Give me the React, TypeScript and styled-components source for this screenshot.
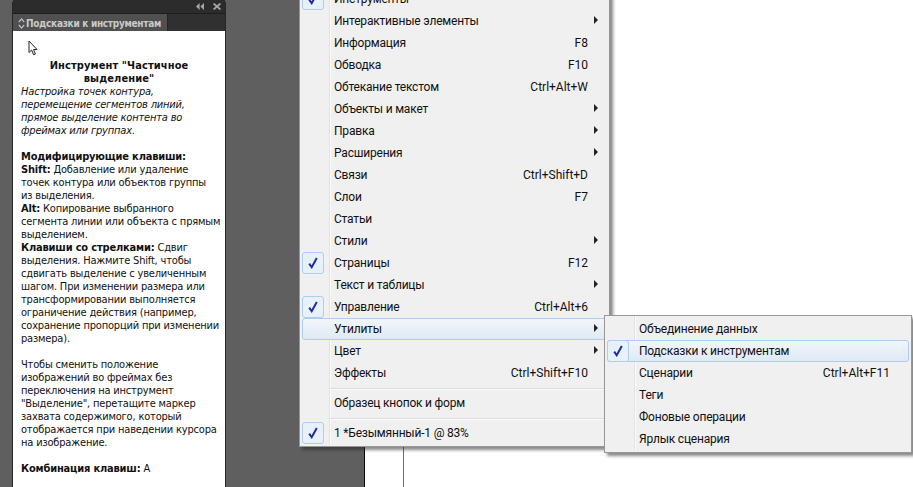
import React from 'react';
import styled, { createGlobalStyle } from 'styled-components';

const Global = createGlobalStyle`
  html, body { margin: 0; padding: 0; background: #fff; }
  #root { width: 913px; height: 487px; }
`;

const Screen = styled.div`
  position: relative;
  width: 913px;
  height: 487px;
  overflow: hidden;
  display: flex;
  background: #5f5f5f;
`;

const Panel = styled.section`
  width: 212px;
  margin-left: 12px;
  height: 487px;
  display: flex;
  flex-direction: column;
  background: #2f2f2f;
  border-left: 1px solid #262626;
  border-right: 1px solid #262626;
  border-radius: 4px 4px 0 0;
  box-sizing: content-box;
`;

const TitleBar = styled.div`
  height: 13px;
  display: flex;
  align-items: center;
  justify-content: flex-end;
  gap: 9px;
  padding-right: 4px;
  background: #2c2c2c;
  border-bottom: 1px solid #1e1e1e;
`;

const TabRow = styled.div`
  height: 17px;
  display: flex;
  background: #303030;
`;

const Tab = styled.div`
  width: 155px;
  display: flex;
  align-items: center;
  gap: 1px;
  padding: 1px 0 0 5px;
  box-sizing: border-box;
  background: #505050;
  border-right: 1px solid #262626;
  color: #cacaca;
  font: bold 10px "DejaVu Sans", sans-serif;
  font-stretch: condensed;
  letter-spacing: -0.3px;
  white-space: nowrap;
  svg { flex-shrink: 0; }
`;

const Help = styled.div`
  position: relative;
  flex: 1;
  background: #fff;
  padding: 28px 0 0 8px;
  color: #111;
  font: 11px/13px "DejaVu Sans", sans-serif;
  font-stretch: condensed;
  letter-spacing: -0.18px;
  white-space: nowrap;
  overflow: hidden;
`;

const Heading = styled.div`
  font-weight: bold;
  text-align: center;
  margin-left: -8px;
  letter-spacing: 0.1px;
`;

const Lead = styled.div`
  font-style: italic;
  margin-bottom: 13px;
`;

const Para = styled.div`
  margin-bottom: 13px;
`;

const Pointer = styled.svg`
  position: absolute;
  left: 15px;
  top: 9px;
`;

const Workspace = styled.div`
  width: 138px;
  background: #5f5f5f;
`;

const Page = styled.div`
  flex: 1;
  display: flex;
  background: #fff;
  border-left: 1px solid #0a0a0a;
  padding-left: 38px;
`;

const Guide = styled.div`
  width: 1px;
  background: #9a3fe0;
`;

const Menu = styled.div<{ $left: number; $top: number; $width: number }>`
  position: absolute;
  left: ${p => p.$left}px;
  top: ${p => p.$top}px;
  width: ${p => p.$width}px;
  box-sizing: border-box;
  padding: 2px;
  background: linear-gradient(to right, #f0f0f0 0, #f0f0f0 29px, #e2e2e2 29px, #e2e2e2 30px, #fbfbfb 30px, #fbfbfb 31px, #f0f0f0 31px);
  background-size: 100% calc(100% - 2px);
  background-repeat: no-repeat;
  background-color: #f0f0f0;
  border: 1px solid #979797;
  box-shadow: 3px 3px 3px rgba(40, 40, 40, 0.55);
  color: #111;
  font: 12px Roboto, sans-serif;
`;

const Item = styled.div<{ $hot?: boolean }>`
  position: relative;
  height: 22px;
  display: flex;
  align-items: center;
  box-sizing: border-box;
  padding: 0 ${p => (p.$hot ? 18 : 19)}px 0 ${p => (p.$hot ? 31 : 32)}px;
  border: ${p => (p.$hot ? '1px solid #aeccf0' : 'none')};
  border-radius: 3px;
  background: ${p => (p.$hot ? 'linear-gradient(to bottom, #f2f6fb, #dfe9f6)' : 'transparent')};
  white-space: nowrap;
`;

const Label = styled.span`
  flex: 1;
  letter-spacing: -0.2px;
`;

const Arrow = styled.span<{ $hot?: boolean }>`
  position: absolute;
  right: ${p => (p.$hot ? 8 : 9)}px;
  top: 50%;
  margin-top: -5px;
  border-left: 4px solid #222;
  border-top: 4px solid transparent;
  border-bottom: 4px solid transparent;
`;

const CheckBox = styled.span<{ $hot?: boolean }>`
  position: absolute;
  left: ${p => (p.$hot ? -1 : 0)}px;
  top: ${p => (p.$hot ? -1 : 0)}px;
  width: 22px;
  height: 22px;
  box-sizing: border-box;
  display: flex;
  align-items: center;
  justify-content: center;
  border: 1px solid #aeccf0;
  border-radius: 3px;
  background: #e8f0fa;
`;

const Divider = styled.div`
  height: 1px;
  margin: 4px 0 2px 28px;
  background: #dcdcdc;
  border-bottom: 1px solid #fbfbfb;
`;

const Check = () => (
  <svg width="10" height="12" viewBox="0 0 10 12">
    <path d="M1.2 6.6 L3.7 10.2 L8.8 1" fill="none" stroke="#1c2f9e" strokeWidth="2" />
  </svg>
);

type Row = { t: string; k?: string; sub?: boolean; on?: boolean; hot?: boolean };

const Rows = ({ rows }: { rows: Row[] }) => (
  <>
    {rows.map(r => (
      <Item key={r.t} $hot={r.hot}>
        {r.on && (
          <CheckBox $hot={r.hot}>
            <Check />
          </CheckBox>
        )}
        <Label>{r.t}</Label>
        {r.k && <span>{r.k}</span>}
        {r.sub && <Arrow $hot={r.hot} />}
      </Item>
    ))}
  </>
);

const mainRows: Row[] = [
  { t: 'Инструменты', on: true },
  { t: 'Интерактивные элементы', sub: true },
  { t: 'Информация', k: 'F8' },
  { t: 'Обводка', k: 'F10' },
  { t: 'Обтекание текстом', k: 'Ctrl+Alt+W' },
  { t: 'Объекты и макет', sub: true },
  { t: 'Правка', sub: true },
  { t: 'Расширения', sub: true },
  { t: 'Связи', k: 'Ctrl+Shift+D' },
  { t: 'Слои', k: 'F7' },
  { t: 'Статьи' },
  { t: 'Стили', sub: true },
  { t: 'Страницы', k: 'F12', on: true },
  { t: 'Текст и таблицы', sub: true },
  { t: 'Управление', k: 'Ctrl+Alt+6', on: true },
  { t: 'Утилиты', sub: true, hot: true },
  { t: 'Цвет', sub: true },
  { t: 'Эффекты', k: 'Ctrl+Shift+F10' },
];

const subRows: Row[] = [
  { t: 'Объединение данных' },
  { t: 'Подсказки к инструментам', on: true, hot: true },
  { t: 'Сценарии', k: 'Ctrl+Alt+F11' },
  { t: 'Теги' },
  { t: 'Фоновые операции' },
  { t: 'Ярлык сценария' },
];

export default function App() {
  return (
    <Screen>
      <Global />
      <Panel>
        <TitleBar>
          <svg width="8" height="7" viewBox="0 0 8 7">
            <path d="M3.6 0 V7 L0 3.5 Z M8 0 V7 L4.4 3.5 Z" fill="#a8a8a8" />
          </svg>
          <svg width="8" height="7" viewBox="0 0 8 7">
            <path d="M0.6 0.5 L7.4 6.5 M7.4 0.5 L0.6 6.5" stroke="#a8a8a8" strokeWidth="1.7" />
          </svg>
        </TitleBar>
        <TabRow>
          <Tab>
            <svg width="7" height="11" viewBox="0 0 7 11">
              <path d="M0.8 4 L3.5 1 L6.2 4 M0.8 7 L3.5 10 L6.2 7" fill="none" stroke="#bdbdbd" strokeWidth="1.2" />
            </svg>
            Подсказки к инструментам
          </Tab>
        </TabRow>
        <Help>
          <Pointer width="10" height="16" viewBox="0 0 10 16">
            <path d="M1 1 V12.5 L3.6 10 L5.6 14.8 L7.4 14 L5.5 9.5 H9 Z" fill="#fff" stroke="#222" strokeWidth="1" />
          </Pointer>
          <Heading>
            Инструмент "Частичное
            <br />
            выделение"
          </Heading>
          <Lead>
            Настройка точек контура,
            <br />
            перемещение сегментов линий,
            <br />
            прямое выделение контента во
            <br />
            фреймах или группах.
          </Lead>
          <Para>
            <b>Модифицирующие клавиши:</b>
            <br />
            <b>Shift:</b> Добавление или удаление
            <br />
            точек контура или объектов группы
            <br />
            из выделения.
            <br />
            <b>Alt:</b> Копирование выбранного
            <br />
            сегмента линии или объекта с прямым
            <br />
            выделением.
            <br />
            <b>Клавиши со стрелками:</b> Сдвиг
            <br />
            выделения. Нажмите Shift, чтобы
            <br />
            сдвигать выделение с увеличенным
            <br />
            шагом. При изменении размера или
            <br />
            трансформировании выполняется
            <br />
            ограничение действия (например,
            <br />
            сохранение пропорций при изменении
            <br />
            размера).
          </Para>
          <Para>
            Чтобы сменить положение
            <br />
            изображений во фреймах без
            <br />
            переключения на инструмент
            <br />
            "Выделение", перетащите маркер
            <br />
            захвата содержимого, который
            <br />
            отображается при наведении курсора
            <br />
            на изображение.
          </Para>
          <Para>
            <b>Комбинация клавиш:</b> A
          </Para>
        </Help>
      </Panel>
      <Workspace />
      <Page>
        <Guide />
      </Page>
      <Menu $left={299} $top={-15} $width={311}>
        <Rows rows={mainRows} />
        <Divider />
        <Item>
          <Label>Образец кнопок и форм</Label>
        </Item>
        <Divider />
        <Rows rows={[{ t: '1 *Безымянный-1 @ 83%', on: true }]} />
      </Menu>
      <Menu $left={604} $top={315} $width={308}>
        <Rows rows={subRows} />
      </Menu>
    </Screen>
  );
}
